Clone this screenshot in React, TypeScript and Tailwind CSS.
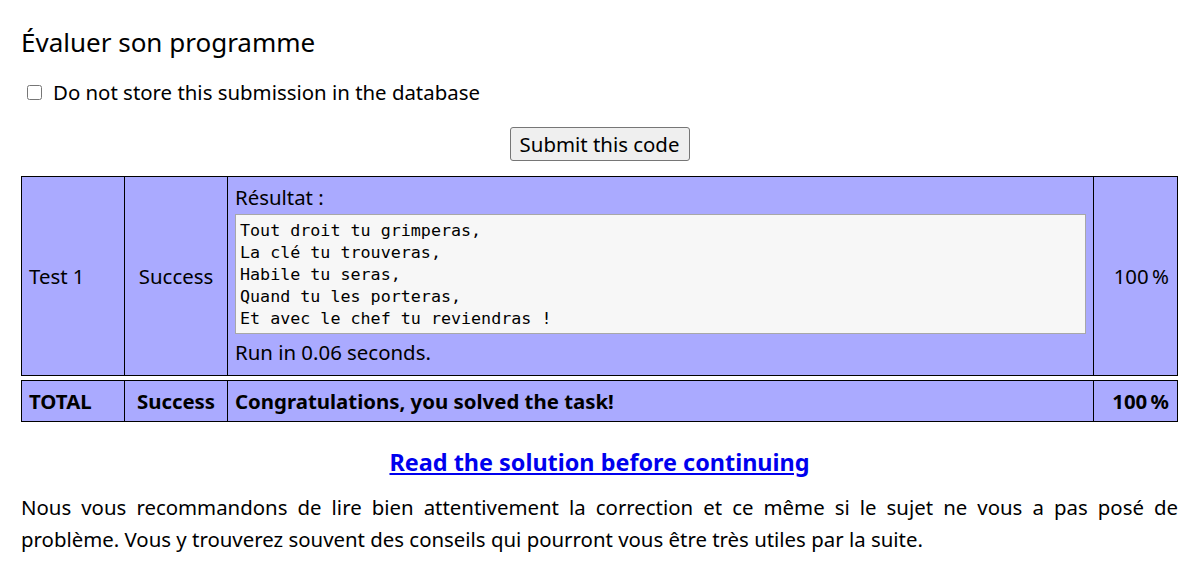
const poem = [
  "Tout droit tu grimperas,",
  "La clé tu trouveras,",
  "Habile tu seras,",
  "Quand tu les porteras,",
  "Et avec le chef tu reviendras !",
];

const cols = "grid grid-cols-[103px_103px_866px_1fr]";

export default function App() {
  return (
    <div
      className="min-h-[577px] bg-white px-[21px] pt-[22px] text-[20.4px] text-black"
      style={{ fontFamily: '"Noto Sans", "Open Sans", sans-serif' }}
    >
      <h2 className="h-[40px] text-[26px] leading-[40px] font-normal">Évaluer son programme</h2>

      <label className="mt-[14px] flex h-[32px] items-center pl-[6px]">
        <input type="checkbox" className="m-0 h-[15px] w-[15px]" />
        <span className="ml-[11px] leading-[32px]">Do not store this submission in the database</span>
      </label>

      <div className="mt-[19px] flex justify-center">
        <button
          type="button"
          className="h-[34px] w-[180px] rounded-[3px] border border-[#767676] bg-[#efefef] text-[20.4px] leading-[30px]"
        >
          Submit this code
        </button>
      </div>

      <div className="mt-[15px] border border-black bg-[#aaaaff]">
        <div className={`${cols} h-[198px]`}>
          <div className="flex items-center border-r border-black px-[7px]">Test 1</div>
          <div className="flex items-center justify-center border-r border-black">Success</div>
          <div className="flex flex-col border-r border-black px-[7px] pt-[8px]">
            <div className="h-[24px] leading-[24px]">Résultat :</div>
            <pre
              className="mt-[5px] border border-[#a8a8a8] bg-[#f7f7f7] px-[4px] py-[4px] text-[16.7px] leading-[22px]"
              style={{ fontFamily: '"DejaVu Sans Mono", monospace' }}
            >
              {poem.join("\n")}
            </pre>
            <div className="mt-[6px] h-[24px] leading-[24px]">Run in 0.06 seconds.</div>
          </div>
          <div className="flex items-center justify-end px-[8px]">100&#8239;%</div>
        </div>
      </div>

      <div className="mt-[4px] border border-black bg-[#aaaaff] font-bold">
        <div className={`${cols} h-[40px]`}>
          <div className="flex items-center border-r border-black px-[7px]">TOTAL</div>
          <div className="flex items-center justify-center border-r border-black">Success</div>
          <div className="flex items-center border-r border-black px-[7px]">
            Congratulations, you solved the task!
          </div>
          <div className="flex items-center justify-end px-[8px]">100&#8239;%</div>
        </div>
      </div>

      <div className="mt-[24px] text-center leading-[32px]">
        <a href="#" className="text-[23.4px] leading-[32px] font-bold text-[#0000ee] underline">
          Read the solution before continuing
        </a>
      </div>

      <p className="mt-[12px] text-justify text-[20.4px] leading-[32px]">
        Nous vous recommandons de lire bien attentivement la correction et ce même si le sujet ne vous a pas
        posé de problème. Vous y trouverez souvent des conseils qui pourront vous être très utiles par la suite.
      </p>
    </div>
  );
}
